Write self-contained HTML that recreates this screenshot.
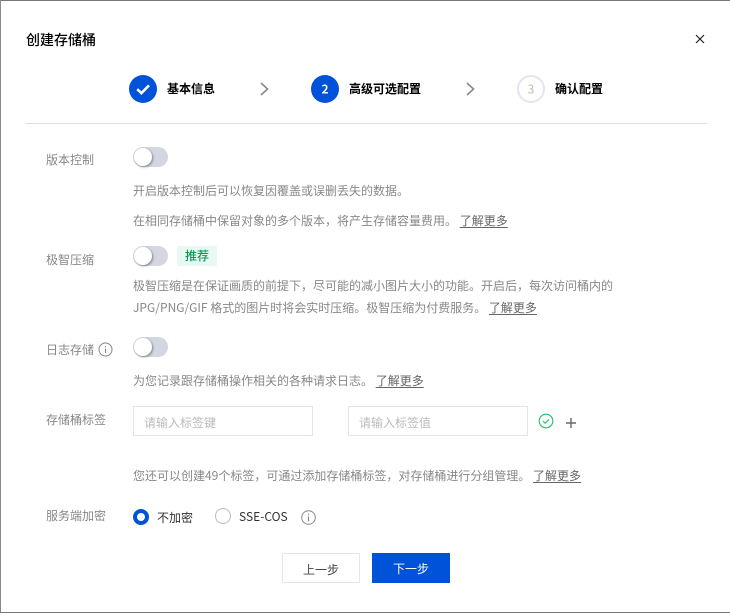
<!DOCTYPE html>
<html lang="zh-CN">
<head>
<meta charset="utf-8">
<title>创建存储桶</title>
<style>
html,body{margin:0;padding:0;width:730px;height:613px;overflow:hidden;background:#fff}
body{position:relative;font-family:"Noto Sans CJK SC","Liberation Sans",sans-serif;font-size:12px;color:#888}
.a{position:absolute;white-space:nowrap;line-height:18px}
.step{color:#000;font-weight:700}
.lab{color:#888;left:46px}
.d{color:#888;left:133px}
.u{color:#666;text-decoration:underline;text-underline-offset:2px}
.sw{position:absolute;left:133px;width:35px;height:20px;border-radius:10px;background:#d3d7e2}
.sw i{position:absolute;left:1px;top:1px;width:18px;height:18px;border-radius:50%;background:#fff;box-shadow:1px 1px 2px rgba(0,0,0,.4)}
.inp{position:absolute;top:406px;width:178px;height:28px;border:1px solid #e3e5ee;background:#fff;color:#bbb;line-height:31px;text-indent:10px}
.btn{position:absolute;top:553px;height:28px;line-height:31px;text-align:center}
svg{position:absolute;overflow:visible}
</style>
</head>
<body>
<div style="position:absolute;left:0;top:0;width:730px;height:1px;background:#777"></div>
<div style="position:absolute;left:0;top:0;width:1px;height:613px;background:#888"></div>
<div style="position:absolute;left:0;top:612px;width:730px;height:1px;background:#777"></div>

<div class="a" style="left:26px;top:30px;font-size:14px;line-height:20px;color:#000;font-weight:500">创建存储桶</div>
<svg style="left:696px;top:35px" width="8" height="8" viewBox="0 0 8 8"><path d="M0 0L8 8M8 0L0 8" stroke="#222" stroke-width="1.2" fill="none"/></svg>

<svg style="left:129px;top:75px" width="28" height="28" viewBox="0 0 28 28"><circle cx="14" cy="14" r="14" fill="#0052d9"/><path d="M8.2 14.2L12.4 18.2L20 10.4" stroke="#fff" stroke-width="2.6" fill="none"/></svg>
<div class="a step" style="left:167px;top:80px">基本信息</div>
<svg style="left:260px;top:82px" width="9" height="14" viewBox="0 0 9 14"><path d="M1 1L7.5 7L1 13" stroke="#888" stroke-width="1.6" fill="none"/></svg>

<svg style="left:311px;top:75px" width="28" height="28" viewBox="0 0 28 28"><circle cx="14" cy="14" r="14" fill="#0052d9"/><text x="14" y="18.4" font-family="Noto Sans CJK SC,sans-serif" font-size="12" font-weight="700" fill="#fff" text-anchor="middle">2</text></svg>
<div class="a step" style="left:349px;top:80px">高级可选配置</div>
<svg style="left:466px;top:82px" width="9" height="14" viewBox="0 0 9 14"><path d="M1 1L7.5 7L1 13" stroke="#888" stroke-width="1.6" fill="none"/></svg>

<svg style="left:517px;top:75px" width="28" height="28" viewBox="0 0 28 28"><circle cx="14" cy="14" r="13" fill="#fff" stroke="#e3e6ee" stroke-width="2"/><text x="14" y="18.4" font-family="Noto Sans CJK SC,sans-serif" font-size="12" fill="#bbb" text-anchor="middle">3</text></svg>
<div class="a step" style="left:555px;top:80px">确认配置</div>

<div style="position:absolute;left:26px;top:123px;width:681px;height:1px;background:#ddd"></div>

<div class="a lab" style="top:151px">版本控制</div>
<div class="sw" style="top:147px"><i></i></div>
<div class="a d" style="top:182px">开启版本控制后可以恢复因覆盖或误删丢失的数据。</div>
<div class="a d" style="top:212px">在相同存储桶中保留对象的多个版本，将产生存储容量费用。 <span class="u">了解更多</span></div>

<div class="a lab" style="top:251px">极智压缩</div>
<div class="sw" style="top:246px"><i></i></div>
<div class="a" style="left:177px;top:246px;width:40px;height:20px;line-height:19px;background:#e8f8f2;color:#0a9a57;font-weight:500;text-align:center;border-radius:1px">推荐</div>
<div class="a d" style="top:277px">极智压缩是在保证画质的前提下，尽可能的减小图片大小的功能。开启后，每次访问桶内的</div>
<div class="a d" style="top:299px">JPG/PNG/GIF 格式的图片时将会实时压缩。极智压缩为付费服务。 <span class="u">了解更多</span></div>

<div class="a lab" style="top:341px">日志存储</div>
<svg style="left:98px;top:342px" width="15" height="15" viewBox="0 0 15 15"><circle cx="7.5" cy="7.5" r="6.5" fill="none" stroke="#888" stroke-width="1"/><path d="M7.5 6.5V11M7.5 4V5.3" stroke="#888" stroke-width="1.1"/></svg>
<div class="sw" style="top:337px"><i></i></div>
<div class="a d" style="top:372px">为您记录跟存储桶操作相关的各种请求日志。 <span class="u">了解更多</span></div>

<div class="a lab" style="top:411px">存储桶标签</div>
<div class="inp" style="left:133px">请输入标签键</div>
<div class="inp" style="left:348px">请输入标签值</div>
<svg style="left:538px;top:413px" width="16" height="16" viewBox="0 0 16 16"><circle cx="8" cy="8" r="6.8" fill="none" stroke="#1fc16b" stroke-width="1.1"/><path d="M5 8.2L7.2 10.2L11 6.3" fill="none" stroke="#1fc16b" stroke-width="1.1"/></svg>
<svg style="left:565px;top:417px" width="12" height="12" viewBox="0 0 12 12"><path d="M6 1V11M1 6H11" stroke="#666" stroke-width="1.4"/></svg>

<div class="a d" style="top:467px">您还可以创建49个标签，可通过添加存储桶标签，对存储桶进行分组管理。 <span class="u">了解更多</span></div>

<div class="a lab" style="top:507px">服务端加密</div>
<svg style="left:133px;top:509px" width="16" height="16" viewBox="0 0 16 16"><circle cx="8" cy="8" r="6" fill="#fff" stroke="#0052d9" stroke-width="4"/><circle cx="8" cy="8" r="3.2" fill="#fff"/></svg>
<div class="a" style="left:157px;top:509px;color:#333">不加密</div>
<svg style="left:215px;top:508px" width="16" height="16" viewBox="0 0 16 16"><circle cx="8" cy="8" r="7.5" fill="#fff" stroke="#bbb" stroke-width="1"/></svg>
<div class="a" style="left:239px;top:508px;color:#333">SSE-COS</div>
<svg style="left:301px;top:510px" width="15" height="15" viewBox="0 0 15 15"><circle cx="7.5" cy="7.5" r="6.8" fill="none" stroke="#888" stroke-width="1"/><path d="M7.5 6.5V11.2M7.5 3.8V5.2" stroke="#888" stroke-width="1.1"/></svg>

<div class="btn" style="left:282px;width:76px;border:1px solid #e3e5ee;color:#444">上一步</div>
<div class="btn" style="left:372px;width:78px;height:30px;background:#0052d9;color:#fff;line-height:32px">下一步</div>
</body>
</html>
